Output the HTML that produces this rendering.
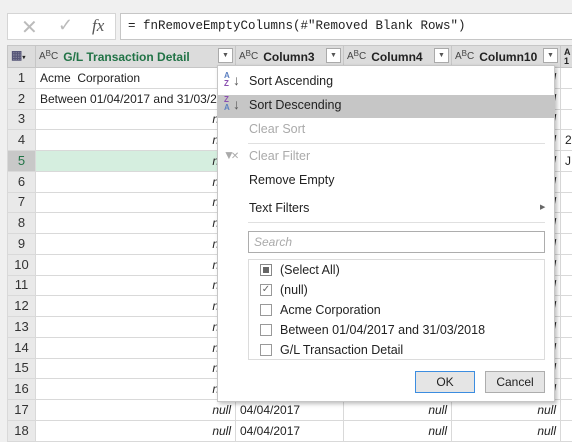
<!DOCTYPE html>
<html><head><style>
*{box-sizing:border-box;margin:0;padding:0}
body{width:572px;height:441px;overflow:hidden;background:#f0f0f0;font-family:"Liberation Sans",sans-serif;font-size:12px;color:#222;position:relative}
.abs{position:absolute}
.fbox{background:#fff;border:1px solid #c6c6c6}
table{border-collapse:collapse;position:absolute;left:7px;top:45px;table-layout:fixed;background:#fff;width:583px}
td{border:1px solid #d9d9d9;height:20.75px;line-height:18px;padding:0 4px;white-space:nowrap;overflow:hidden;font-size:12px}
td.n{background:#e9e9e9;text-align:center;color:#333;font-size:13px;padding:0}
th{background:#dcdcdc;border:1px solid #c6c6c6;height:20px;line-height:18px;text-align:left;font-size:12px;padding:0 3px;white-space:nowrap;overflow:hidden;position:relative}
.i{font-style:italic;text-align:right}
.abc{font-size:10px;font-weight:normal;color:#444;margin-right:5px;display:inline-block;line-height:10px;vertical-align:middle}
.abc b{font-weight:normal;position:relative;top:-3px;font-size:8px}
.dd{position:absolute;right:2px;top:2px;width:15px;height:15px;background:#fff;border:1px solid #aaa;font-size:7px;text-align:center;line-height:13px;color:#555}
.menu{position:absolute;left:217px;top:65px;width:338px;height:337px;background:#fff;border:1px solid #c6c6c6;box-shadow:2px 2px 4px rgba(0,0,0,.25)}
.it{position:absolute;left:31px;font-size:12.5px;color:#222}
.dis{color:#aaa}
.sep{position:absolute;left:30px;width:297px;height:1px;background:#e0e0e0}
.cb{position:absolute;left:42px;width:12px;height:12px;border:1px solid #999;background:#fff}
.li{position:absolute;left:62px;font-size:12.5px}
.btn{position:absolute;top:370px;height:22px;width:60px;background:#e5e5e5;border:1px solid #adadad;text-align:center;line-height:20px;font-size:12px}
</style></head><body>
<div class="abs fbox" style="left:7px;top:13px;width:109px;height:27px;border-color:#d5d5d5">
<span class="abs" style="left:13px;top:1px;font-size:20px;color:#bbb">✕</span>
<span class="abs" style="left:50px;top:1px;font-size:18px;color:#bbb">✓</span>
<span class="abs" style="left:84px;top:2px;font-size:17px;font-style:italic;font-family:'Liberation Serif',serif;color:#555">fx</span>
</div>
<div class="abs fbox" style="left:120px;top:13px;width:460px;height:27px;font-family:'Liberation Mono',monospace;font-size:12.5px;padding:5px 7px">= fnRemoveEmptyColumns(#"Removed Blank Rows")</div>
<table>
<colgroup><col style="width:28px"><col style="width:200px"><col style="width:108px"><col style="width:108px"><col style="width:109px"><col style="width:30px"></colgroup>
<tr><th style="background:#dcdcdc"><span style="color:#557;font-size:12px">▦</span><span style="font-size:6px">▾</span></th>
<th style="color:#217346"><span class="abc">A<b>B</b>C</span>G/L Transaction Detail<span class="dd">▼</span></th>
<th><span class="abc">A<b>B</b>C</span>Column3<span class="dd">▼</span></th>
<th><span class="abc">A<b>B</b>C</span>Column4<span class="dd">▼</span></th>
<th><span class="abc">A<b>B</b>C</span>Column10<span class="dd">▼</span></th>
<th style="font-size:9px;line-height:9px">A<br>1</th></tr>
<tr><td class="n">1</td><td>Acme &nbsp;Corporation</td><td></td><td></td><td class="i">null</td><td></td></tr>
<tr><td class="n">2</td><td>Between 01/04/2017 and 31/03/2018</td><td></td><td></td><td class="i">null</td><td></td></tr>
<tr><td class="n">3</td><td class="i">null</td><td></td><td></td><td class="i">null</td><td></td></tr>
<tr><td class="n">4</td><td class="i">null</td><td></td><td></td><td class="i">null</td><td>2</td></tr>
<tr><td class="n" style="background:#c8c8c8;color:#217346">5</td><td class="i" style="background:#d5eedf">null</td><td></td><td></td><td class="i">null</td><td>J</td></tr>
<tr><td class="n">6</td><td class="i">null</td><td></td><td></td><td class="i">null</td><td></td></tr>
<tr><td class="n">7</td><td class="i">null</td><td></td><td></td><td class="i">null</td><td></td></tr>
<tr><td class="n">8</td><td class="i">null</td><td></td><td></td><td class="i">null</td><td></td></tr>
<tr><td class="n">9</td><td class="i">null</td><td></td><td></td><td class="i">null</td><td></td></tr>
<tr><td class="n">10</td><td class="i">null</td><td></td><td></td><td class="i">null</td><td></td></tr>
<tr><td class="n">11</td><td class="i">null</td><td></td><td></td><td class="i">null</td><td></td></tr>
<tr><td class="n">12</td><td class="i">null</td><td></td><td></td><td class="i">null</td><td></td></tr>
<tr><td class="n">13</td><td class="i">null</td><td></td><td></td><td class="i">null</td><td></td></tr>
<tr><td class="n">14</td><td class="i">null</td><td></td><td></td><td class="i">null</td><td></td></tr>
<tr><td class="n">15</td><td class="i">null</td><td></td><td></td><td class="i">null</td><td></td></tr>
<tr><td class="n">16</td><td class="i">null</td><td></td><td></td><td class="i">null</td><td></td></tr>
<tr><td class="n">17</td><td class="i">null</td><td>04/04/2017</td><td class="i">null</td><td class="i">null</td><td></td></tr>
<tr><td class="n">18</td><td class="i">null</td><td>04/04/2017</td><td class="i">null</td><td class="i">null</td><td></td></tr>
</table>
<div class="menu">
<div class="abs" style="left:0;top:29px;width:337px;height:23px;background:#c6c6c6"></div>
<div class="abs" style="left:6px;top:6px;font-size:8px;line-height:8px;color:#5b7fc0;font-weight:bold">A<br><span style="color:#8a4fb0">Z</span></div><div class="abs" style="left:15px;top:6px;font-size:14px;color:#555">↓</div>
<div class="it" style="top:8px">Sort Ascending</div>
<div class="abs" style="left:6px;top:30px;font-size:8px;line-height:8px;color:#8a4fb0;font-weight:bold">Z<br><span style="color:#5b7fc0">A</span></div><div class="abs" style="left:15px;top:30px;font-size:14px;color:#555">↓</div>
<div class="it" style="top:32px">Sort Descending</div>
<div class="it dis" style="top:56px">Clear Sort</div>
<div class="sep" style="top:77px"></div>
<div class="abs" style="left:5px;top:82px;font-size:12px;color:#aaa">▼<span style="font-size:10px;margin-left:-4px">✕</span></div>
<div class="it dis" style="top:83px">Clear Filter</div>
<div class="it" style="top:107px">Remove Empty</div>
<div class="it" style="top:135px">Text Filters</div>
<div class="abs" style="left:322px;top:137px;font-size:7px;color:#666">▶</div>
<div class="sep" style="top:156px"></div>
<div class="abs" style="left:30px;top:165px;width:297px;height:22px;border:1px solid #adadad;padding:3px 5px;font-style:italic;color:#aaa">Search</div>
<div class="abs" style="left:30px;top:193px;width:297px;height:101px;border:1px solid #dcdcdc"></div>
<div class="cb" style="top:198px;border-color:#888"><div style="margin:2px;width:6px;height:6px;background:#666"></div></div><div class="li" style="top:197px">(Select All)</div>
<div class="cb" style="top:218px;font-size:10px;line-height:10px;color:#666;text-align:center">✓</div><div class="li" style="top:217px">(null)</div>
<div class="cb" style="top:238px"></div><div class="li" style="top:237px">Acme Corporation</div>
<div class="cb" style="top:258px"></div><div class="li" style="top:257px">Between 01/04/2017 and 31/03/2018</div>
<div class="cb" style="top:278px"></div><div class="li" style="top:277px">G/L Transaction Detail</div>
<div class="btn" style="left:197px;top:305px;border-color:#3c8de0">OK</div>
<div class="btn" style="left:267px;top:305px">Cancel</div>
</div>
</body></html>
